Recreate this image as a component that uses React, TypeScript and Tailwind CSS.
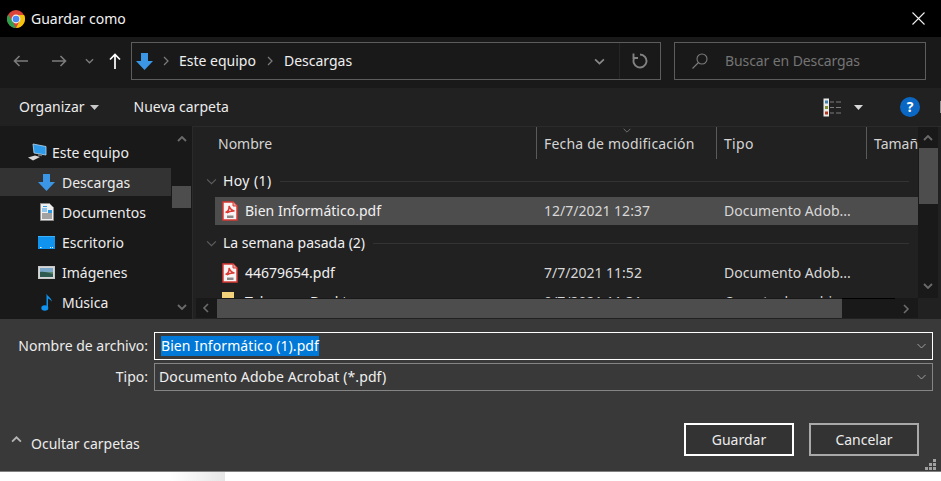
import React from "react";

function Chrome() {
  return (
    <svg width="18" height="18" viewBox="0 0 18 18">
      <circle cx="9" cy="9" r="9" fill="#db4437" />
      <path d="M9 18A9 9 0 0 1 1.2 4.5L5.5 11 9 18Z" fill="#2f9e4f" />
      <path d="M9 5h8.1A9 9 0 0 1 9 18l3.6-7L9 5Z" fill="#f4c20d" />
      <circle cx="9" cy="9" r="4.4" fill="#f1f1f1" />
      <circle cx="9" cy="9" r="3.3" fill="#4a8af4" />
    </svg>
  );
}

function Arrow({ dir, color, w = 15, h = 12, sw = 1.6 }: { dir: "l" | "r"; color: string; w?: number; h?: number; sw?: number }) {
  return (
    <svg width={w} height={h} viewBox="0 0 15 12" fill="none" stroke={color} strokeWidth={sw}>
      {dir === "l" ? <path d="M15 6H1.5M6.5 1 1.5 6l5 5" /> : <path d="M0 6h13.5M8.5 1l5 5-5 5" />}
    </svg>
  );
}

function Chev({ dir, color, w = 10, h = 6, sw = 1.5 }: { dir: "d" | "u" | "l" | "r"; color: string; w?: number; h?: number; sw?: number }) {
  const d = {
    d: "M1 1l4 4 4-4",
    u: "M1 5l4-4 4 4",
    l: "M6 1 2 5l4 4",
    r: "M4 1l4 4-4 4",
  }[dir];
  const vb = dir === "d" || dir === "u" ? "0 0 10 6" : "0 0 10 10";
  return (
    <svg width={w} height={h} viewBox={vb} fill="none" stroke={color} strokeWidth={sw}>
      <path d={d} />
    </svg>
  );
}

function BlueDown({ s = 17 }: { s?: number }) {
  return (
    <svg width={s} height={s} viewBox="0 0 17 17">
      <path d="M5 0h7v8h5l-8.5 9L0 8h5V0Z" fill="#3b97e6" />
    </svg>
  );
}

function Pdf() {
  return (
    <svg width="16" height="20" viewBox="0 0 16 20">
      <path d="M1 1h10l4 4v14H1Z" fill="#f8f4f4" stroke="#d83a34" strokeWidth="1.5" />
      <path d="M11 1v4h4" fill="#e9a5a0" stroke="#d83a34" strokeWidth="1" />
      <path d="M3.5 11.5c2.5-1 3.8-3.5 3.6-6.5 1 3 2.800 4.500 5.400 5-3-.2-5.600.3-7.600 2" fill="none" stroke="#dc3a34" strokeWidth="1.500" />
      <rect x="5" y="14.500" width="6.500" height="2.500" fill="#8d8585" />
    </svg>
  );
}

function Monitor() {
  return (
    <svg width="19" height="18" viewBox="0 0 19 18">
      <path d="M5 1l13 2.500V12L6 10Z" fill="#2d9bea" stroke="#b7d7ee" strokeWidth="0.800" />
      <path d="M10 11l4 .8v1.500l-4-.5Z" fill="#777" />
      <path d="M0 14.500 7 12.500l5 1.500-7 3.500Z" fill="#d8d8d8" />
    </svg>
  );
}

function Doc() {
  return (
    <svg width="14" height="18" viewBox="0 0 14 18">
      <path d="M.5.500h9l4 4v13H.5Z" fill="#efefef" stroke="#8d8d8d" />
      <path d="M3 3.500h4M2 6h5M2 8h5" stroke="#2c9ae6" strokeWidth="1" />
      <path d="M8 7h4v3H8Z" fill="#2c9ae6" />
      <path d="M2 11h10M2 13h10M2 15h10" stroke="#555" strokeWidth="1" />
    </svg>
  );
}

function Desk() {
  return (
    <svg width="17" height="13" viewBox="0 0 17 13">
      <rect width="17" height="13" fill="#0f93ee" />
      <rect x="0" y="0" width="17" height="1" fill="#3bb0fb" />
      <path d="M2 11.500h1.500M12 11.500h1M14 11.500h1" stroke="#e6f5ff" strokeWidth="1" />
    </svg>
  );
}

function Pic() {
  return (
    <svg width="17" height="13" viewBox="0 0 17 13">
      <rect x=".5" y=".5" width="16" height="12" fill="#d6d6d6" stroke="#c9c9c9" />
      <rect x="2" y="2" width="13" height="4" fill="#7ba7c9" />
      <rect x="2" y="6" width="13" height="5" fill="#5d8a70" />
      <path d="M2 6c4-1 8 1 13 2v3H2Z" fill="#2f5a52" />
    </svg>
  );
}

function Note() {
  return (
    <svg width="12" height="18" viewBox="0 0 12 18">
      <ellipse cx="3.800" cy="15" rx="3.500" ry="2.800" fill="#0f93ee" />
      <path d="M5.500 15V.500c.5 3 5.500 4 5.500 9 0-2-3-3.500-4-4V15Z" fill="#0f93ee" />
    </svg>
  );
}

function Caret({ c = "#c8c8c8" }: { c?: string }) {
  return (
    <svg width="9" height="5" viewBox="0 0 9 5">
      <path d="M0 0h9L4.500 5Z" fill={c} />
    </svg>
  );
}

function ViewIcon() {
  return (
    <svg width="19" height="19" viewBox="0 0 19 19">
      <rect x=".5" y=".5" width="5.500" height="18" fill="#e9e9e9" />
      <rect x="2" y="2.500" width="3" height="3" fill="#3d7fa8" />
      <rect x="2" y="8" width="3" height="3" fill="#7d8c2d" />
      <rect x="2" y="13.500" width="3" height="3" fill="#b3331f" />
      <path d="M7 4h4M13 4h5M7 9.500h4M13 9.500h5M7 15h4M13 15h5" stroke="#7d7d7d" strokeWidth="1" />
    </svg>
  );
}

function Row({ icon, name, date, type, selected }: { icon: React.ReactNode; name: string; date: string; type: string; selected?: boolean }) {
  return (
    <div className={`flex h-[28px] shrink-0 items-center ml-[22px] ${selected ? "bg-[#4d4d4d]" : ""}`}>
      <div className="flex w-[30px] shrink-0 justify-start pl-[7px]">{icon}</div>
      <div className="w-[299px] shrink-0 text-[#f0f0f0]">{name}</div>
      <div className="w-[180px] shrink-0 text-[#d8d8d8]">{date}</div>
      <div className="truncate text-[#d8d8d8]">{type}</div>
    </div>
  );
}

function Group({ label, track = "" }: { label: string; track?: string }) {
  return (
    <div className="flex h-[18px] shrink-0 items-center pl-[13px] pr-[9px]">
      <div className="w-[17px] shrink-0">
        <Chev dir="d" color="#5f5f5f" w={11} h={7} sw={1} />
      </div>
      <div className={`shrink-0 text-[#f0f0f0] ${track}`}>{label}</div>
      <div className="ml-[8px] h-px flex-1 bg-[#333333]" />
    </div>
  );
}

function NavItem({ icon, label, active, pl = "pl-[38px]" }: { icon: React.ReactNode; label: string; active?: boolean; pl?: string }) {
  return (
    <div className="flex h-[30px] items-start">
      <div className={`flex h-[28px] w-full items-center ${pl} ${active ? "bg-[#333333]" : ""}`}>
        <div className="flex w-[24px] shrink-0 items-center">{icon}</div>
        <span className="mt-[2px] text-[#ececec]">{label}</span>
      </div>
    </div>
  );
}

function Head({ label, w, sort, track = "" }: { label: string; w: string; sort?: boolean; track?: string }) {
  return (
    <div className={`relative flex h-[32px] shrink-0 items-center pl-[7px] pt-[2px] ${w} border-r border-[#5a5a5a]`}>
      {sort && (
        <div className="absolute left-[85px] top-[1px]">
          <Chev dir="d" color="#8a8a8a" w={10} h={5} sw={0.9} />
        </div>
      )}
      <span className={`text-[#d4d4d4] ${track}`}>{label}</span>
    </div>
  );
}

export default function App() {
  return (
    <div className="flex h-[481px] w-[941px] flex-col overflow-hidden bg-white font-['Noto_Sans',sans-serif] text-[14px] leading-[20px]">
      {/* Title bar */}
      <div className="flex h-[37px] shrink-0 items-center bg-black pl-[7px] pr-[16px]">
        <Chrome />
        <span className="ml-[6px] mt-[1px] flex-1 text-[#f2f2f2]">Guardar como</span>
        <svg width="13" height="13" viewBox="0 0 13 13" stroke="#f0f0f0" strokeWidth="1.100">
          <path d="M.5.500l12 12M12.500.500l-12 12" />
        </svg>
      </div>

      {/* Navigation */}
      <div className="h-[51px] shrink-0 bg-[#191919] pt-[5px]">
        <div className="flex h-[38px] items-center pl-[13px]">
          <Arrow dir="l" color="#7c7c7c" />
          <div className="ml-[24px]"><Arrow dir="r" color="#7c7c7c" /></div>
          <div className="ml-[18px]"><Chev dir="d" color="#7c7c7c" w={9} h={6} sw={1.5} /></div>
          <div className="ml-[15px]">
            <svg width="12" height="16" viewBox="0 0 12 16" fill="none" stroke="#ffffff" strokeWidth="1.700">
              <path d="M6 16V1.500M1 6.500l5-5 5 5" />
            </svg>
          </div>
          <div className="ml-[10px] flex h-[38px] w-[530px] shrink-0 items-center border border-[#5c5c5c] pl-[4px]">
            <BlueDown />
            <div className="ml-[7px]"><Chev dir="r" color="#7c7c7c" w={10} h={10} sw={1.2} /></div>
            <span className="ml-[9px] text-[#efefef]">Este equipo</span>
            <div className="ml-[8px]"><Chev dir="r" color="#7c7c7c" w={10} h={10} sw={1.2} /></div>
            <span className="ml-[10px] text-[#efefef]">Descargas</span>
            <div className="flex-1" />
            <div className="mr-[14px]"><Chev dir="d" color="#8a8a8a" w={11} h={7} sw={1.5} /></div>
            <div className="flex h-full w-[41px] items-center justify-center border-l border-[#262626]">
              <svg width="16" height="16" viewBox="0 0 16 16" fill="none" stroke="#828282" strokeWidth="1.900">
                <path d="M8 1.500A6.500 6.500 0 1 1 2.400 4.700" />
                <path d="M1.500 .5v4.500H6" />
              </svg>
            </div>
          </div>
          <div className="ml-[13px] flex h-[38px] w-[252px] shrink-0 items-center border border-[#5c5c5c] pl-[17px]">
            <svg width="16" height="16" viewBox="0 0 16 16" fill="none" stroke="#7c7c7c" strokeWidth="1.100">
              <circle cx="10" cy="6" r="5" />
              <path d="M6.500 9.500 .5 15.500" />
            </svg>
            <span className="ml-[17px] tracking-[-0.1px] text-[#747474]">Buscar en Descargas</span>
          </div>
        </div>
      </div>

      {/* Toolbar */}
      <div className="flex h-[38px] shrink-0 items-center bg-[#212121] pl-[19px]">
        <span className="text-[#ececec]">Organizar</span>
        <div className="ml-[5px]"><Caret /></div>
        <span className="ml-[35px] text-[#ececec]">Nueva carpeta</span>
        <div className="flex-1" />
        <ViewIcon />
        <div className="ml-[12px]"><Caret c="#d8d8d8" /></div>
        <div className="ml-[37px] mr-[20px] flex h-[20px] w-[20px] items-center justify-center rounded-full bg-[#0b67c4] text-[14px] font-bold text-white">?</div>
        <div className="h-[12px] w-px bg-[#8f8f8f]" />
      </div>

      {/* Main */}
      <div className="flex h-[193px] shrink-0 bg-[#212121]">
        {/* Sidebar */}
        <div className="flex w-[192px] shrink-0 bg-[#191919]">
          <div className="w-[171px] shrink-0 pt-[12px]">
            <NavItem icon={<Monitor />} label="Este equipo" pl="pl-[28px]" />
            <NavItem icon={<BlueDown />} label="Descargas" active />
            <NavItem icon={<div className="pl-[2px]"><Doc /></div>} label="Documentos" />
            <NavItem icon={<Desk />} label="Escritorio" />
            <NavItem icon={<Pic />} label="Imágenes" />
            <NavItem icon={<div className="pl-[3px]"><Note /></div>} label="Música" />
          </div>
          <div className="flex w-[20px] shrink-0 flex-col items-center pl-[1px] pt-[10px]">
            <Chev dir="u" color="#6b6b6b" w={10} h={6} sw={1.800} />
            <div className="mt-[44px] h-[22px] w-[19px] bg-[#4d4d4d]" />
            <div className="flex-1" />
            <div className="pb-[9px]"><Chev dir="d" color="#6b6b6b" w={10} h={6} sw={1.800} /></div>
          </div>
        </div>

        {/* Files */}
        <div className="flex min-w-0 flex-1 flex-col border-l border-[#2a2a2a]">
          <div className="flex h-[172px] shrink-0 border-t border-[#2b2b2b]">
            <div className="flex min-w-0 w-[725px] shrink-0 flex-col overflow-hidden">
              <div className="flex h-[32px] shrink-0 overflow-hidden">
                <div className="h-[32px] w-[18px] shrink-0" />
                <Head label="Nombre" w="w-[326px] pl-[7px]" />
                <Head label="Fecha de modificación" w="w-[180px]" sort track="tracking-[0.2px]" />
                <Head label="Tipo" w="w-[150px]" track="tracking-[0.3px]" />
                <div className="flex h-[32px] shrink-0 items-center pl-[7px] pt-[2px] text-[#d4d4d4]">Tamaño</div>
              </div>
              <div className="mt-[13px]"><Group label="Hoy (1)" track="tracking-[0.4px]" /></div>
              <div className="mt-[7px]"><Row icon={<Pdf />} name="Bien Informático.pdf" date="12/7/2021 12:37" type="Documento Adob..." selected /></div>
              <div className="mt-[9px]"><Group label="La semana pasada (2)" /></div>
              <div className="mt-[7px]"><Row icon={<Pdf />} name="44679654.pdf" date="7/7/2021 11:52" type="Documento Adob..." /></div>
              <div className="mt-[1px]">
                <Row
                  icon={<div className="h-[20px] w-[12px] bg-[#f2d27a]" />}
                  name="Telegram Desktop"
                  date="9/7/2021 11:31"
                  type="Carpeta de archivos"
                />
              </div>
            </div>
            <div className="flex w-[20px] shrink-0 flex-col items-center bg-[#191919] pt-[8px]">
              <Chev dir="u" color="#6b6b6b" w={10} h={6} sw={1.800} />
              <div className="mt-[7px] h-[56px] w-[19px] bg-[#4d4d4d]" />
              <div className="flex-1" />
              <div className="pb-[9px]"><Chev dir="d" color="#6b6b6b" w={10} h={6} sw={1.800} /></div>
            </div>
          </div>
          <div className="flex h-[20px] shrink-0 items-stretch">
            <div className="w-[3px] shrink-0 bg-[#212121]" />
            <div className="flex w-[722px] shrink-0 items-center bg-[#191919]">
              <div className="flex w-[21px] shrink-0 justify-center">
                <Chev dir="l" color="#6b6b6b" w={10} h={10} sw={1.600} />
              </div>
              <div className="h-[19px] w-[625px] shrink-0 bg-[#4d4d4d]" />
              <div className="flex h-full flex-1 flex-col">
                <div className="h-px w-[53px] bg-black" />
                <div className="flex flex-1 items-center justify-end pr-[8px]">
                  <Chev dir="r" color="#6b6b6b" w={10} h={10} sw={1.600} />
                </div>
              </div>
            </div>
          </div>
        </div>
      </div>

      {/* Bottom */}
      <div className="relative flex h-[152px] shrink-0 flex-col bg-[#393939] pl-[17px] pr-[8px] pt-[13px]">
        <div className="flex h-[28px] items-center">
          <div className="w-[131px] shrink-0 whitespace-nowrap text-right text-[#ececec]">Nombre de archivo:</div>
          <div className="ml-[6px] flex h-[28px] w-[779px] shrink-0 items-center border border-white pl-[6px] pr-[5px]">
            <span className="bg-[#0078d7] tracking-[0.08px] text-white">Bien Informático (1).pdf</span>
            <div className="flex-1" />
            <Chev dir="d" color="#a0a0a0" w={11} h={6} sw={1} />
          </div>
        </div>
        <div className="mt-[3px] flex h-[28px] items-center">
          <div className="w-[131px] shrink-0 text-right text-[#ececec]">Tipo:</div>
          <div className="ml-[6px] flex h-[28px] w-[779px] shrink-0 items-center border border-[#858585] pl-[4px] pr-[5px]">
            <span className="tracking-[0.1px] text-[#f0f0f0]">Documento Adobe Acrobat (*.pdf)</span>
            <div className="flex-1" />
            <Chev dir="d" color="#a0a0a0" w={11} h={6} sw={1} />
          </div>
        </div>
        <div className="mt-[32px] flex items-center -ml-[6px]">
          <Chev dir="u" color="#b5b5b5" w={11} h={7} sw={1.600} />
          <span className="ml-[9px] mt-[8px] text-[#ececec]">Ocultar carpetas</span>
          <div className="flex-1" />
          <button className="h-[33px] w-[110px] border-2 border-white bg-[#333333] text-[#ececec]">Guardar</button>
          <button className="ml-[15px] mr-[14px] h-[33px] w-[110px] border-2 border-[#a9a9a9] bg-[#333333] text-[#ececec]">Cancelar</button>
        </div>
        <div className="absolute bottom-[1px] right-[5px]">
          <svg width="11" height="11" viewBox="0 0 11 11" fill="#a0a0a0">
            <rect x="8" y="0" width="3" height="3" />
            <rect x="4" y="4" width="3" height="3" />
            <rect x="8" y="4" width="3" height="3" />
            <rect x="0" y="8" width="3" height="3" />
            <rect x="4" y="8" width="3" height="3" />
            <rect x="8" y="8" width="3" height="3" />
          </svg>
        </div>
      </div>

      {/* Window edge and what lies under it */}
      <div className="h-[1px] shrink-0 bg-[#808080]" />
      <div className="flex flex-1 bg-white">
        <div className="ml-[170px] w-[55px] bg-gradient-to-r from-white to-[#e6e6e6]" />
      </div>
    </div>
  );
}
